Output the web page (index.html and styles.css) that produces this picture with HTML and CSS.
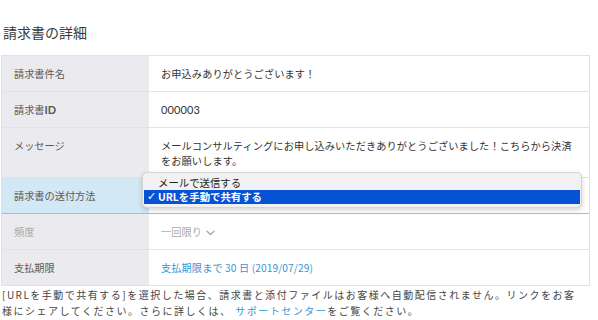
FILE: index.html
```html
<!DOCTYPE html>
<html>

<head>
<title>請求書の詳細</title>
<meta charset="UTF-8">

<link rel="stylesheet" href="styles.css">
</head>

<body>

	<div id="page">
		<h2 class="title">請求書の詳細</h2>

		<div class="details">
			<div class="row">
				<div class="label">請求書件名</div>
				<div class="value">お申込みありがとうございます！</div>
			</div>
			<div class="row">
				<div class="label">請求書<span class="latin">ID</span></div>
				<div class="value latin">000003</div>
			</div>
			<div class="row multi">
				<div class="label">メッセージ</div>
				<div class="value">メールコンサルティングにお申し込みいただきありがとうございました！こちらから決済をお願いします。</div>
			</div>
			<div class="row active">
				<div class="label">請求書の送付方法</div>
				<div class="value"></div>

				<ul class="popup">
					<li>メールで送信する</li>
					<li class="checked"><span class="check">✓</span>URLを手動で共有する</li>
				</ul>
			</div>
			<div class="row muted">
				<div class="label">頻度</div>
				<div class="value">一回限り
					<svg class="chevron" width="9" height="6" viewBox="0 0 9 6"><path d="M1 1.2 L4.5 4.6 L8 1.2" fill="none" stroke="#a9a9a9" stroke-width="1.4" stroke-linecap="round" stroke-linejoin="round"/></svg>
				</div>
			</div>
			<div class="row">
				<div class="label">支払期限</div>
				<div class="value link">支払期限まで 30 日 (2019/07/29)</div>
			</div>
		</div>

		<p class="note">[URLを手動で共有する]を選択した場合、請求書と添付ファイルはお客様へ自動配信されません。リンクをお客様にシェアしてください。さらに詳しくは、 <a href="#">サポートセンター</a>をご覧ください。</p>
	</div>

</body>
</html>
```

FILE: styles.css
```css
* {
	box-sizing: border-box;
}
body {
	margin: 0;
	background: #fff;
	font-family: "Noto Sans CJK JP", sans-serif;
	color: #333;
}

#page {
	width: 590px;
	padding-left: 1px;
}

.title {
	margin: 0;
	padding: 24px 2px 0;
	font-size: 14px;
	font-weight: normal;
	line-height: 16px;
	color: #3a3a3a;
}

.details {
	margin-top: 15px;
	border: 1px solid #e2e2e2;
	border-bottom: 0;
}

.row {
	position: relative;
	display: grid;
	grid-template-columns: 147px 1fr;
	border-bottom: 1px solid #e2e2e2;
	font-size: 10.2px;
	line-height: 15px;
}

.label {
	padding: 10px 12px;
	background: #ebebef;
	color: #5a5a5a;
}

.value {
	padding: 10px 12px;
	background: #fff;
	color: #333;
	letter-spacing: 0.1px;
}

.latin {
	font-family: "Lato", "Noto Sans CJK JP", sans-serif;
	font-size: 11px;
}
.label .latin {
	font-weight: bold;
	color: #555;
}

.row.multi .value,
.row.multi .label {
	padding-bottom: 9px;
}

.row.active {
	border-bottom-color: #8ec4e8;
}
.row.active .label {
	background: #d3e8f5;
}

.row.muted .label,
.row.muted .value {
	color: #aaa;
}
.chevron {
	margin-left: 1px;
	vertical-align: 0;
}

.link {
	color: #3796d6;
}

.popup {
	position: absolute;
	top: -6px;
	left: 140px;
	width: 440px;
	margin: 0;
	padding: 3px 1px;
	list-style: none;
	background: #f1f1f1;
	border: 1px solid #d4d4d4;
	border-radius: 5px;
	box-shadow: 0 2px 5px rgba(0, 0, 0, 0.18);
	font-size: 10.4px;
	line-height: 14px;
	color: #222;
	z-index: 1;
}
.popup li {
	position: relative;
	padding-left: 14px;
}
.popup li.checked {
	background: #0751d4;
	color: #fff;
	font-weight: bold;
}
.popup .check {
	position: absolute;
	left: 3px;
	top: 0;
	font-family: "DejaVu Sans", sans-serif;
	font-size: 11px;
	font-weight: bold;
}

.note {
	max-width: 582px;
	margin: 1px 0 0;
	padding-left: 1px;
	font-size: 10px;
	letter-spacing: 1.5px;
	line-height: 16px;
	color: #444;
}
.note a {
	color: #3796d6;
	text-decoration: none;
}
```
